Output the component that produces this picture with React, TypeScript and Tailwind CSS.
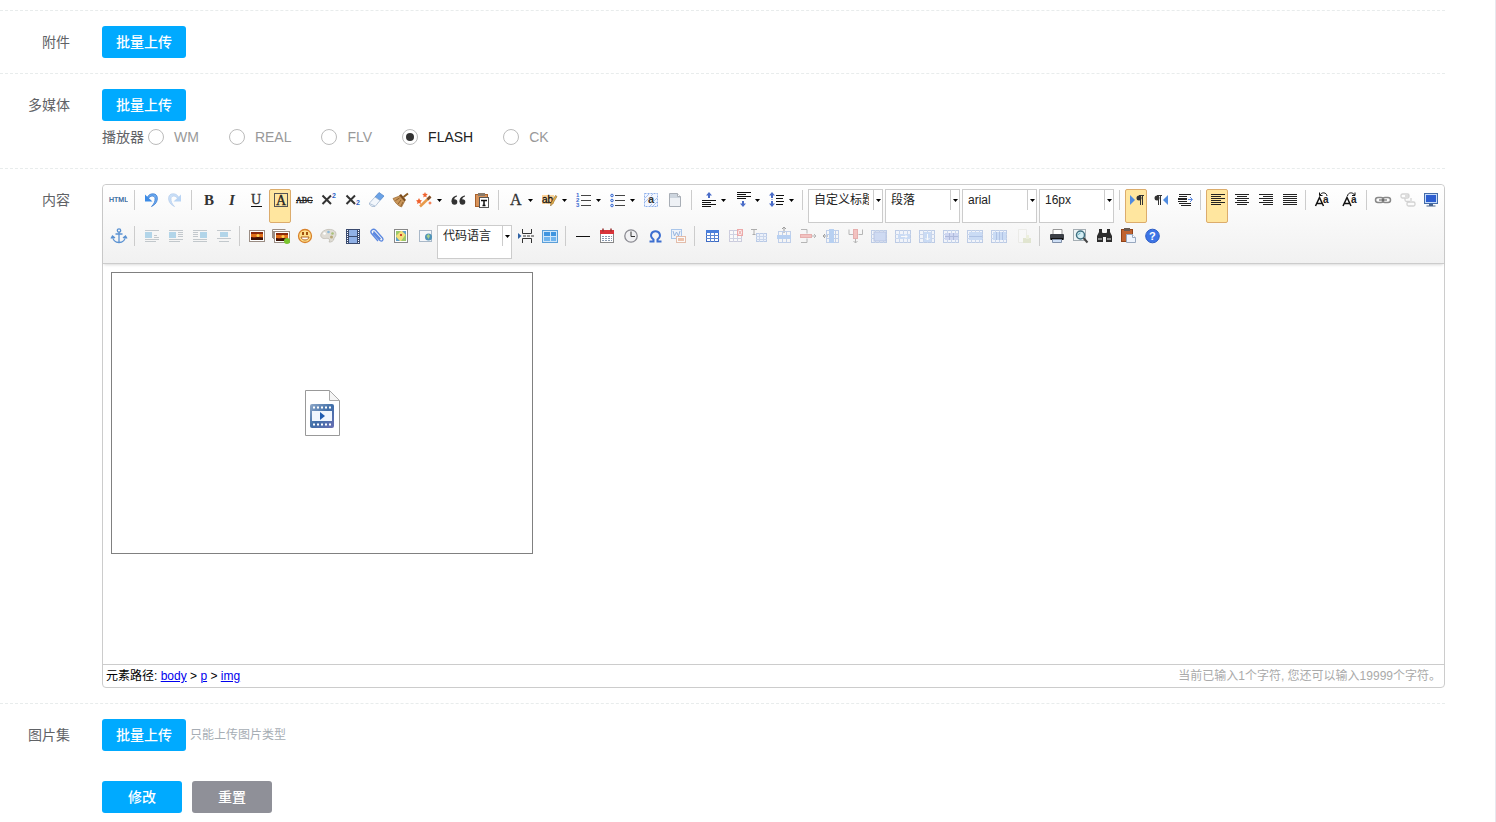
import type { ReactNode } from "react";

/* ---------- toolbar icons, all on a 20x20 grid ---------- */

const Bars = ({ rows, color = "#222" }: { rows: number[][]; color?: string }) => (
  <>
    {rows.map(([x, y, w], i) => (
      <rect key={i} x={x} y={y} width={w} height={1} fill={color} />
    ))}
  </>
);

const Grid = ({ children, x = 2, w = 16 }: { children?: ReactNode; x?: number; w?: number }) => (
  <g>
    <rect x={x + 0.5} y={4.5} width={w - 1} height={12} fill="#eef4ff" stroke="#86a3d6" />
    <path
      d={`M${x} 8.5h${w}M${x} 12.5h${w}M${x + 4.5} 4v13M${x + w / 2 + 0.5} 4v13M${x + w - 3.5} 4v13`}
      stroke="#9db6e2"
      fill="none"
    />
    {children}
  </g>
);

const Photo = ({ x, y }: { x: number; y: number }) => (
  <g>
    <rect x={x + 0.5} y={y + 0.5} width={15} height={11} fill="#fff" stroke="#9a8d84" />
    <rect x={x + 2} y={y + 2} width={12} height={8} fill="#8a2a0c" />
    <rect x={x + 2} y={y + 4} width={12} height={3} fill="#e0701a" />
    <circle cx={x + 9} cy={y + 5.5} r={1.5} fill="#ffd257" />
    <path d={`M${x + 2} ${y + 10}v-3l3 1 4-1 5 1v2z`} fill="#3c1206" />
  </g>
);

const undoShape = (
  <>
    <path d="M7.500 8.500C9 5.500 13.500 5 14 8.500C14.200 11.500 13 14 10.500 16.500C18 13.500 18 4 12.500 3.800C9.500 3.500 7.500 5 6.500 7z" fill="#6aa8ee" stroke="#2f74cf" strokeWidth=".7" />
    <path d="M4 4.500V11.500h7.500L8.800 9 6.500 7z" fill="#3c8be6" />
  </>
);

const upArrow = (x: number, y: number) => <path d={`M${x} ${y}l3 3.500h-2v2.500h-2v-2.500h-2z`} fill="#4a6cc8" />;
const downArrow = (x: number, y: number) => <path d={`M${x} ${y}l3-3.500h-2v-2.500h-2v2.500h-2z`} fill="#4a6cc8" />;

const icons: Record<string, ReactNode> = {
  source: (
    <text x="1" y="12" fontSize="7" fontFamily="Liberation Sans" fill="#1f5c99" stroke="#1f5c99" strokeWidth=".2">HTML</text>
  ),
  undo: undoShape,
  redo: <g transform="matrix(-1 0 0 1 20 0)" opacity=".35">{undoShape}</g>,
  bold: <text x="6" y="15" fontSize="15" fontWeight="bold" fontFamily="Liberation Serif" fill="#333">B</text>,
  italic: <text x="7" y="15" fontSize="15" fontWeight="bold" fontStyle="italic" fontFamily="Liberation Serif" fill="#333">I</text>,
  underline: (
    <>
      <text x="5" y="14" fontSize="14" fontFamily="Liberation Serif" fill="#333" stroke="#333" strokeWidth=".3">U</text>
      <rect x="5" y="16" width="11" height="1" fill="#111" />
    </>
  ),
  fontborder: (
    <>
      <rect x="4.500" y="3.500" width="13" height="13" fill="none" stroke="#555" />
      <text x="6" y="15" fontSize="14" fontFamily="Liberation Serif" fill="#222" stroke="#222" strokeWidth=".3">A</text>
    </>
  ),
  strike: (
    <>
      <text x="2" y="13" fontSize="8" fontFamily="Liberation Serif" fill="#222" stroke="#222" strokeWidth=".4">ABC</text>
      <rect x="2" y="10" width="17" height="1" fill="#222" />
    </>
  ),
  sup: (
    <>
      <path d="M4.500 5.500l8.500 8.500M13 5.500l-8.500 8.500" stroke="#333" strokeWidth="2" />
      <text x="14" y="8" fontSize="7" fontWeight="bold" fontFamily="Liberation Sans" fill="#2f62c4">2</text>
    </>
  ),
  sub: (
    <>
      <path d="M4.500 5.500l8.500 8.500M13 5.500l-8.500 8.500" stroke="#333" strokeWidth="2" />
      <text x="14" y="15" fontSize="7" fontWeight="bold" fontFamily="Liberation Sans" fill="#2f62c4">2</text>
    </>
  ),
  eraser: (
    <>
      <path d="M13 2.500l5 3.500-4 4.500-5-3.500z" fill="#6aa2e6" stroke="#4a80c6" strokeWidth=".7" />
      <path d="M9 7l5 3.500-5 6H6l-2.500-2V13z" fill="#f3f7fc" stroke="#9ab0cc" strokeWidth=".7" />
      <path d="M3.500 13.500l5.500 2.500" stroke="#9ab0cc" strokeWidth=".7" />
    </>
  ),
  broom: (
    <>
      <path d="M18 3.500l-4.500 3.500" stroke="#8a5a20" strokeWidth="2" />
      <path d="M11 4l5 6-1.500 1.500-5.500-6z" fill="#7a4a1a" />
      <path d="M9.500 6l5 5.500-3 5.500c-3-1-6.500-4-8.500-8.500z" fill="#c9965a" stroke="#98662e" strokeWidth=".7" />
      <path d="M9.500 8L5.500 10.500M11 10l-3 4M13 12l-2 4" stroke="#7a4a1a" strokeWidth=".7" />
    </>
  ),
  wand: (
    <>
      <path d="M6 16.500L16.500 6.500" stroke="#e89a4a" strokeWidth="2.500" />
      <path d="M13.500 9.500l3-3" stroke="#7a5030" strokeWidth="2.500" />
      <path d="M5 8l1 2 2 .5-1.500 1.500.5 2-2-1-2 1 .5-2L2 10.500l2-.5zM11 2l.8 1.700 2 .3-1.500 1.500.4 2L11 6.500l-1.700 1 .4-2L8.200 4l2-.3zM16 11l.7 1.500 1.500.5-1.500.5-.7 1.500-.7-1.500-1.500-.5 1.500-.5z" fill="#f0622e" />
    </>
  ),
  quote: (
    <g fill="#333">
      <circle cx="6.500" cy="12" r="2.800" />
      <circle cx="14.500" cy="12" r="2.800" />
      <path d="M3.500 12c0-4 2-6 5.500-6.500v1c-2 .5-3 2-3 4zM11.500 12c0-4 2-6 5.500-6.500v1c-2 .5-3 2-3 4z" />
    </g>
  ),
  pasteplain: (
    <>
      <rect x="3.500" y="4.500" width="12" height="12" fill="#d8935a" stroke="#a8602a" />
      <rect x="6" y="3" width="7" height="3" fill="#8a7a6a" />
      <rect x="7.500" y="7.500" width="9" height="10" fill="#fff" stroke="#555" />
      <path d="M9 10.500h6M12 10v6M10.500 15.500h3" stroke="#111" strokeWidth="1.500" />
    </>
  ),
  forecolor: <text x="5" y="15" fontSize="16" fontFamily="Liberation Serif" fill="#333" stroke="#333" strokeWidth=".3">A</text>,
  backcolor: (
    <>
      <rect x="3" y="5" width="12" height="9" fill="#fbd39a" />
      <text x="3" y="13" fontSize="10" fontFamily="Liberation Sans" fill="#111" stroke="#111" strokeWidth=".3">ab</text>
      <path d="M18 6.500l-4.500 7.500-2 2 .5-3L16.500 5.500z" fill="#e6b04a" stroke="#8a6a30" strokeWidth=".6" />
    </>
  ),
  ol: (
    <>
      <g fontSize="6" fontWeight="bold" fontFamily="Liberation Sans" fill="#3a6ad0">
        <text x="3" y="7">1</text>
        <text x="3" y="12">2</text>
        <text x="3" y="17">3</text>
      </g>
      <Bars rows={[[8, 5, 10], [8, 10, 10], [8, 15, 10]]} color="#444" />
    </>
  ),
  ul: (
    <>
      {[5, 10, 15].map((y) => (
        <circle key={y} cx="5" cy={y + 0.5} r="1.300" fill="#cfe0ff" stroke="#3a6ad0" />
      ))}
      <Bars rows={[[8, 5, 10], [8, 10, 10], [8, 15, 10]]} color="#444" />
    </>
  ),
  selectall: (
    <>
      <rect x="3.500" y="3.500" width="13" height="13" fill="#f2f6ff" stroke="#8fb0ea" strokeDasharray="2 1" />
      <path d="M4 8l4-4M4 12l3-3M12 4l-2 2M16 8l-3 3M16 12l-4 4M9 16l2-2" stroke="#a9c3f0" />
      <text x="7" y="13" fontSize="11" fontWeight="bold" fontFamily="Liberation Sans" fill="#333">a</text>
    </>
  ),
  cleardoc: (
    <>
      <path d="M4.500 3.500h8l3 3v10h-11z" fill="#eef1f5" stroke="#a8aeb6" />
      <path d="M5 4h7l3 3v1H5z" fill="#cdd5de" />
      <path d="M12.500 3.500v3h3" fill="#fff" stroke="#a8aeb6" />
    </>
  ),
  spacetop: (
    <>
      {upArrow(11, 2)}
      <Bars rows={[[4, 10, 14], [4, 12, 9], [4, 14, 14], [4, 16, 9]]} color="#111" />
    </>
  ),
  spacebottom: (
    <>
      <Bars rows={[[5, 2, 14], [5, 4, 9], [5, 6, 14], [5, 8, 9]]} color="#111" />
      {downArrow(11, 17)}
    </>
  ),
  lineheight: (
    <>
      {upArrow(6, 2)}
      {downArrow(6, 17)}
      <path d="M6 7v5" stroke="#4a6cc8" strokeDasharray="1 1" />
      <Bars rows={[[10, 5, 8], [10, 8, 7], [10, 11, 8], [10, 14, 7]]} color="#111" />
    </>
  ),
  ltr: (
    <>
      <path d="M4 5l5 5-5 5z" fill="#4f8be0" />
      <path d="M18 5.500H13M14.500 5.500V15M16.500 5.500V15" stroke="#333" fill="none" />
      <circle cx="13" cy="8" r="2.500" fill="#333" />
    </>
  ),
  rtl: (
    <>
      <path d="M18 5l-5 5 5 5z" fill="#4f8be0" />
      <path d="M12 5.500H7M8.500 5.500V15M10.500 5.500V15" stroke="#333" fill="none" />
      <circle cx="7" cy="8" r="2.500" fill="#333" />
    </>
  ),
  indent: (
    <>
      <Bars rows={[[5, 4, 12], [5, 6, 8], [4, 8, 9], [4, 9, 9], [4, 11, 9], [5, 13, 12], [7, 15, 10]]} />
      <path d="M14 9.500h4M16 7l2.500 2.500-2.500 2.500" stroke="#5a86dd" fill="none" />
    </>
  ),
  left: <Bars rows={[[4, 4, 14], [4, 6, 10], [4, 8, 14], [4, 10, 10], [4, 12, 14], [4, 14, 10]]} />,
  center: <Bars rows={[[4, 4, 14], [6, 6, 10], [4, 8, 14], [6, 10, 10], [4, 12, 14], [6, 14, 10]]} />,
  right: <Bars rows={[[4, 4, 14], [8, 6, 10], [4, 8, 14], [8, 10, 10], [4, 12, 14], [8, 14, 10]]} />,
  justify: <Bars rows={[[4, 4, 14], [4, 6, 14], [4, 8, 14], [4, 10, 14], [4, 12, 14], [4, 14, 14]]} />,
  upper: (
    <>
      <path d="M2.500 16l4-8.500L10.500 16M4 13.500h5" stroke="#111" strokeWidth="1.500" fill="none" />
      <text x="10" y="13" fontSize="10" fontWeight="bold" fontFamily="Liberation Sans" fill="#222">a</text>
      <path d="M14 6C13.500 2 8.500 2 7 5M9.500 5.500H6.500V2.500" stroke="#111" fill="none" />
    </>
  ),
  lower: (
    <>
      <path d="M4 16l4-8.500L12 16M5.500 13.500h5" stroke="#111" strokeWidth="1.500" fill="none" />
      <text x="12" y="13" fontSize="10" fontWeight="bold" fontFamily="Liberation Sans" fill="#222">a</text>
      <path d="M8.500 6C9 2 14 2 15.500 5M13 5.500h3V2.500" stroke="#111" fill="none" />
    </>
  ),
  link: (
    <>
      <rect x="2.500" y="7.500" width="8" height="5" rx="2.500" fill="none" stroke="#888" strokeWidth="1.500" />
      <rect x="9.500" y="7.500" width="8" height="5" rx="2.500" fill="none" stroke="#888" strokeWidth="1.500" />
      <path d="M6 10h8" stroke="#555" />
    </>
  ),
  unlink: (
    <g opacity=".35" fill="none" stroke="#888" strokeWidth="1.300">
      <rect x="4" y="4" width="8" height="4" rx="1.500" />
      <path d="M8 8v2c0 1 1 1.500 2 1.500h3M8 6h4M14 8v3" />
      <rect x="10" y="12" width="8" height="4" rx="1.500" />
    </g>
  ),
  fullscreen: (
    <>
      <rect x="3.500" y="3.500" width="13" height="10" fill="#c6dcfa" stroke="#456ca8" />
      <rect x="5" y="5" width="10" height="7" fill="#2d5ed0" />
      <path d="M8 14h4v1.500h2.500v1h-9v-1H8z" fill="#4a668f" />
    </>
  ),
  anchor: (
    <g fill="none" stroke="#5b92d2" strokeWidth="1.300">
      <circle cx="11" cy="4.500" r="1.700" />
      <path d="M11 6v10.500M7.500 8h7M4.500 10.500C5 14.500 8 16.500 11 16.500s6-2 6.500-6M3 12.500l1.500-2.500L7 12M19 12.500L17.500 10 15 12" />
    </g>
  ),
  imgnone: (
    <g opacity=".55">
      <rect x="4" y="6" width="7" height="6" fill="#7cbbe0" />
      <Bars rows={[[4, 4, 14], [13, 9, 3], [13, 11, 5], [4, 13, 14], [4, 15, 11]]} color="#9aa4ac" />
    </g>
  ),
  imgleft: (
    <g opacity=".55">
      <rect x="4" y="6" width="7" height="6" fill="#7cbbe0" />
      <Bars rows={[[4, 4, 14], [13, 6, 5], [13, 8, 5], [13, 10, 5], [4, 13, 14], [4, 15, 11]]} color="#9aa4ac" />
    </g>
  ),
  imgright: (
    <g opacity=".55">
      <rect x="11" y="6" width="7" height="6" fill="#7cbbe0" />
      <Bars rows={[[4, 4, 14], [4, 6, 5], [4, 8, 5], [4, 10, 5], [4, 13, 14], [4, 15, 14]]} color="#9aa4ac" />
    </g>
  ),
  imgcenter: (
    <g opacity=".55">
      <rect x="7" y="6" width="8" height="5" fill="#7cbbe0" />
      <Bars rows={[[4, 4, 14], [4, 12, 14], [6, 15, 10]]} color="#9aa4ac" />
    </g>
  ),
  image: <Photo x={3} y={4} />,
  images: (
    <>
      <path d="M2.500 12V3.500h13M3.500 13V5" stroke="#9a8d84" fill="#fff" />
      <Photo x={4} y={5} />
      <circle cx="17" cy="15" r="3" fill="#7ac52e" />
    </>
  ),
  emoji: (
    <>
      <circle cx="11" cy="10" r="6.500" fill="#fde08c" stroke="#d9822b" strokeWidth="1.300" />
      <rect x="8" y="6" width="2" height="3" fill="#a1520f" />
      <rect x="12" y="6" width="2" height="3" fill="#a1520f" />
      <path d="M7 11h8c-.5 4-7.500 4-8 0z" fill="#fff" stroke="#b5651d" />
    </>
  ),
  scrawl: (
    <>
      <path d="M3 8C5 2.500 15 2 17.500 6c1.500 4-1 5-1.500 6.500 0 2.500-3 4-5 3.500 2-3-1-4-3.500-3.500C4 13 2 10.500 3 8z" fill="#dfdcd5" stroke="#b9b5aa" strokeWidth=".7" />
      <circle cx="6.500" cy="7.500" r="1.300" fill="#fff" />
      <circle cx="10.500" cy="6" r="1.300" fill="#8bb8d8" />
      <circle cx="14.500" cy="7.500" r="1.300" fill="#a8c078" />
      <circle cx="13.500" cy="11" r="1.500" fill="#b8a878" />
    </>
  ),
  video: (
    <>
      <rect x="4" y="3" width="14" height="15" fill="#3a4a6e" />
      <rect x="7" y="4" width="8" height="6" fill="#8fb0e6" />
      <rect x="7" y="11" width="8" height="6" fill="#8fb0e6" />
      <path d="M5.500 4v13M16.500 4v13" stroke="#fff" strokeDasharray="1 1" />
    </>
  ),
  attach: (
    <path
      d="M7 7l7 7.500c2 1.500 4-.5 2.500-2.500L9.500 4C7 2 3.500 5 5.500 7.500l6.500 7.500M7.500 5.500l7 7.500"
      fill="none"
      stroke="#5b88e0"
      strokeWidth="1.300"
    />
  ),
  map: (
    <>
      <rect x="4.500" y="3.500" width="13" height="13" fill="#fff" stroke="#888" />
      <rect x="6" y="5" width="10" height="10" fill="#9cc86a" />
      <path d="M6 10l5-5h5v3l-5 7H9z" fill="#f3df7a" />
      <path d="M12 5h4v4zM6 11l4 4H6z" fill="#5fa0c8" />
      <rect x="10" y="8" width="2" height="2" fill="#d0452c" />
    </>
  ),
  iframe: (
    <>
      <rect x="5.500" y="4.500" width="12" height="11" fill="#f5f7fa" stroke="#a9b8c8" />
      <circle cx="14.500" cy="11" r="3.500" fill="#4f93b8" />
      <path d="M12.500 10l2-2 1.500 2-1.500 3z" fill="#a6d08a" />
    </>
  ),
  pagebreak: (
    <>
      <path d="M7.500 3v4.500h9V3M7.500 17v-4.500h9V17" stroke="#333" fill="none" />
      <path d="M8 10h11" stroke="#333" strokeDasharray="3 1" />
      <path d="M3 7l3.500 3L3 13z" fill="#2f62a4" />
    </>
  ),
  template: (
    <>
      <rect x="3.500" y="4.500" width="15" height="12" fill="#cfe6fa" stroke="#5b9fd8" />
      <rect x="5" y="6" width="6" height="4" fill="#3f95e0" />
      <rect x="12" y="6" width="5" height="4" fill="#3f95e0" />
      <rect x="5" y="11" width="6" height="4" fill="#6fb4ee" />
      <rect x="12" y="11" width="5" height="4" fill="#6fb4ee" />
    </>
  ),
  hr: <rect x="4" y="10" width="14" height="1" fill="#111" />,
  date: (
    <>
      <rect x="4.500" y="4.500" width="13" height="12" fill="#fff" stroke="#888" />
      <rect x="4" y="4" width="14" height="4" fill="#d9343a" />
      <path d="M7 2.500v3M15 2.500v3" stroke="#933" strokeWidth="1.500" />
      <path d="M6 10.500h10M6 12.500h10M6 14.500h10" stroke="#8a9ab0" strokeDasharray="2 1" />
    </>
  ),
  time: (
    <>
      <circle cx="11" cy="10" r="6.200" fill="#f1f1f3" stroke="#8b8b92" strokeWidth="1.300" />
      <path d="M11 5.500V10.500h4" stroke="#333" fill="none" />
    </>
  ),
  omega: (
    <path
      d="M5.500 15.500h4v-2C7 11.500 6.500 9.500 7.500 7.500c1.500-3 6.500-3 8 0 1 2 .5 4-2 6v2h4"
      fill="none"
      stroke="#3d6fd0"
      strokeWidth="2"
    />
  ),
  wordimage: (
    <g opacity=".55">
      <rect x="3.500" y="3.500" width="10" height="9" fill="#e8f1ff" stroke="#6c9fe0" />
      <path d="M5 5l1.500 5L8.500 6l2 4L12 5" stroke="#4a80cc" fill="none" />
      <rect x="8.500" y="10.500" width="9" height="6" fill="#fff" stroke="#d59070" />
      <rect x="10" y="12" width="6" height="3" fill="#e89a70" />
    </g>
  ),
  table: (
    <>
      <rect x="5.500" y="4.500" width="12" height="11" fill="#fff" stroke="#3f6cc4" />
      <rect x="5" y="4" width="13" height="3" fill="#4a7fdc" />
      <path d="M5 9.500h13M5 12.500h13M9.500 7v9M13.500 7v9" stroke="#5c86d2" />
    </>
  ),
  deltable: (
    <g opacity=".45">
      <rect x="4.500" y="4.500" width="12" height="11" fill="#fff" stroke="#9a9ac0" />
      <path d="M4 8.500h13M4 12.500h13M8.500 4v12M12.500 4v12" stroke="#a0a8cc" />
      <rect x="12.500" y="3.500" width="5" height="6" fill="#fde4e4" stroke="#e04a4a" />
      <path d="M13.500 4.500l3 4M16.500 4.500l-3 4" stroke="#e04a4a" />
    </g>
  ),
  parabefore: (
    <g opacity=".5">
      <path d="M2 3.500h6M5 3v6M3.500 8.500h3" stroke="#666" />
      <rect x="7.500" y="7.500" width="10" height="8" fill="#e4eeff" stroke="#7fa0d8" />
      <path d="M7 10.500h11M7 13.500h11M10.500 7v9M14.500 7v9" stroke="#9db6e2" />
    </g>
  ),
  insrow: (
    <g opacity=".6">
      <path d="M11 1v6M9 3l2-2 2 2" stroke="#666" fill="none" />
      <rect x="5.500" y="5.500" width="12" height="11" fill="none" stroke="#9db6e2" />
      <path d="M9.500 5v12M13.500 5v12" stroke="#9db6e2" />
      <rect x="4" y="9" width="14" height="4" fill="#8fb8f0" />
    </g>
  ),
  delrow: (
    <g opacity=".5">
      <path d="M4 3.500h6v4M4 16.500h6v-4M15 10h3M17 8l2 2-2 2" stroke="#777" fill="none" />
      <rect x="3.500" y="8.500" width="11" height="3" fill="#f0908c" stroke="#d86a68" />
    </g>
  ),
  inscol: (
    <g opacity=".6">
      <path d="M2 10h5M4 8l-2 2 2 2" stroke="#666" fill="none" />
      <rect x="5.500" y="4.500" width="12" height="12" fill="none" stroke="#9db6e2" />
      <path d="M5 8.500h13M5 12.500h13M14.500 4v13" stroke="#9db6e2" />
      <rect x="8" y="3" width="5" height="14" fill="#8fb8f0" />
    </g>
  ),
  delcol: (
    <g opacity=".5">
      <path d="M4 3.500v5h4M17.500 3.500v5h-4M10.500 13v4M8.500 15l2 2 2-2" stroke="#777" fill="none" />
      <rect x="8.500" y="3.500" width="4" height="9" fill="#f0908c" stroke="#d86a68" />
    </g>
  ),
  merge: <g opacity=".5"><Grid><rect x="5" y="6" width="12" height="9" fill="#a8bff0" stroke="#7f96d0" /></Grid></g>,
  mergeright: <g opacity=".5"><Grid><rect x="5" y="8" width="12" height="5" fill="#a0c2f4" /><path d="M8 10.500h6M12 8.500l2 2-2 2" stroke="#fff" fill="none" /></Grid></g>,
  mergedown: <g opacity=".5"><Grid><rect x="7" y="6" width="7" height="10" fill="#a0c2f4" /><path d="M10.500 8v6M8.500 12l2 2 2-2" stroke="#fff" fill="none" /></Grid></g>,
  splitcells: <g opacity=".5"><Grid><rect x="4" y="7" width="13" height="7" fill="#a8b8ee" /><path d="M4 10.500h13M8.500 7v7M12.500 7v7" stroke="#6a80c4" /></Grid></g>,
  splitrows: <g opacity=".5"><Grid><rect x="4" y="6" width="13" height="8" fill="#a0c2f4" /><path d="M4 10.500h13" stroke="#6a90d4" /></Grid></g>,
  splitcols: <g opacity=".5"><Grid><rect x="4" y="6" width="13" height="8" fill="#a0c2f4" /><path d="M7.500 6v8M10.500 6v8M13.500 6v8" stroke="#6a90d4" /></Grid></g>,
  charts: (
    <g opacity=".4">
      <path d="M5.500 3.500h8v13h-8z" fill="#fafafa" stroke="#dcdcd4" />
      <path d="M10 12h8v5h-8z" fill="#c4cf9a" />
      <path d="M13 9h3v4h-3z" fill="#dfe6b8" />
    </g>
  ),
  print: (
    <>
      <path d="M7 3.500h9v5H7z" fill="#fff" stroke="#999" />
      <rect x="4" y="8" width="14" height="6" rx="1" fill="#3b3f46" />
      <rect x="5" y="12" width="12" height="2" fill="#111" />
      <path d="M6.500 13.500h9v3h-9z" fill="#cfe0f6" stroke="#7f8fa8" />
    </>
  ),
  preview: (
    <>
      <rect x="3.500" y="3.500" width="12" height="11" fill="#eef4f6" stroke="#a5aeb4" />
      <circle cx="10.500" cy="9" r="4" fill="#d5eef4" stroke="#3f7080" strokeWidth="1.500" />
      <path d="M13.500 12l4 4.500" stroke="#444" strokeWidth="2" />
      <path d="M8.500 9a2 2 0 012-2" stroke="#5fb0c4" fill="none" />
    </>
  ),
  find: (
    <g fill="#2c2c2c">
      <path d="M5 3h3v3l1 2v8H3v-6l2-4zM13 3h3v3l2 4v6h-6V8l1-2z" />
      <rect x="8" y="7" width="5" height="4" />
      <rect x="4" y="12" width="4" height="2" fill="#888" />
      <rect x="13" y="12" width="4" height="2" fill="#888" />
    </g>
  ),
  drafts: (
    <>
      <rect x="3.500" y="3.500" width="11" height="12" fill="#c0622e" stroke="#8f4218" />
      <rect x="6" y="2" width="6" height="3" fill="#6a5a50" />
      <path d="M8.500 8.500h6l3 3v5h-9z" fill="#eef4fd" stroke="#98a8bf" />
      <path d="M14.500 8.500v3h3" fill="#fff" stroke="#98a8bf" />
    </>
  ),
  help: (
    <>
      <circle cx="10.500" cy="10" r="6.800" fill="#3d74e6" stroke="#2c5cc4" />
      <text x="7" y="14" fontSize="11" fontWeight="bold" fontFamily="Liberation Sans" fill="#fff">?</text>
    </>
  ),
};

/* ---------- toolbar parts ---------- */

type Item =
  | "|"
  | { icon: string; label: string; menu?: boolean; on?: boolean; wide?: boolean }
  | { select: string; label: string };

const tool = (icon: string, label: string, extra: { menu?: boolean; on?: boolean; wide?: boolean } = {}): Item => ({ icon, label, ...extra });

const items: Item[] = [
  tool("source", "源代码"), "|",
  tool("undo", "撤销"), tool("redo", "重做"), "|",
  tool("bold", "加粗"), tool("italic", "斜体"), tool("underline", "下划线"), tool("fontborder", "字符边框", { on: true }),
  tool("strike", "删除线"), tool("sup", "上标"), tool("sub", "下标"), tool("eraser", "清除格式"), tool("broom", "格式刷"),
  tool("wand", "自动排版", { menu: true }), tool("quote", "引用"), tool("pasteplain", "纯文本粘贴模式"), "|",
  tool("forecolor", "字体颜色", { menu: true }), tool("backcolor", "背景色", { menu: true }),
  tool("ol", "有序列表", { menu: true }), tool("ul", "无序列表", { menu: true }),
  tool("selectall", "全选"), tool("cleardoc", "清空文档"), "|",
  tool("spacetop", "段前距", { menu: true }), tool("spacebottom", "段后距", { menu: true }), tool("lineheight", "行间距", { menu: true }), "|",
  { select: "自定义标题", label: "标题样式" }, { select: "段落", label: "段落格式" }, { select: "arial", label: "字体" }, { select: "16px", label: "字号" }, "|",
  tool("ltr", "从左向右输入", { on: true }), tool("rtl", "从右向左输入"), tool("indent", "首行缩进"), "|",
  tool("left", "居左对齐", { on: true }), tool("center", "居中对齐"), tool("right", "居右对齐"), tool("justify", "两端对齐"), "|",
  tool("upper", "字母大写", { wide: true }), tool("lower", "字母小写", { wide: true }), "|",
  tool("link", "超链接"), tool("unlink", "取消链接"), tool("fullscreen", "全屏"),
  tool("anchor", "锚点"), "|",
  tool("imgnone", "默认"), tool("imgleft", "左浮动"), tool("imgright", "右浮动"), tool("imgcenter", "居中"), "|",
  tool("image", "单图上传"), tool("images", "多图上传"), tool("emoji", "表情"), tool("scrawl", "涂鸦"), tool("video", "视频"),
  tool("attach", "附件"), tool("map", "地图"), tool("iframe", "插入Iframe"),
  { select: "代码语言", label: "代码语言" },
  tool("pagebreak", "分页"), tool("template", "模板"), "|",
  tool("hr", "分隔线"), tool("date", "日期"), tool("time", "时间"), tool("omega", "特殊字符"), tool("wordimage", "图片转存"), "|",
  tool("table", "插入表格"), tool("deltable", "删除表格"), tool("parabefore", "表格前插入行"), tool("insrow", "前插入行"),
  tool("delrow", "删除行"), tool("inscol", "前插入列"), tool("delcol", "删除列"), tool("merge", "合并多个单元格"),
  tool("mergeright", "右合并单元格"), tool("mergedown", "下合并单元格"), tool("splitcells", "完全拆分单元格"),
  tool("splitrows", "拆分成行"), tool("splitcols", "拆分成列"), tool("charts", "图表"), "|",
  tool("print", "打印"), tool("preview", "预览"), tool("find", "查询替换"), tool("drafts", "从草稿箱加载"), tool("help", "帮助"),
];

const Caret = () => (
  <svg viewBox="0 0 5 3" className="h-[3px] w-[5px] shrink-0">
    <path d="M0 0h5L2.500 3z" fill="#000" />
  </svg>
);

const ToolbarItem = ({ item }: { item: Item }) => {
  if (item === "|") {
    return <span className="mx-1 mt-px h-5 w-px bg-[#ccc]" />;
  }
  if ("select" in item) {
    return (
      <div className="mx-px flex h-[34px] w-[75px] items-start border border-[#ccc] bg-white">
        <select
          aria-label={item.label}
          className="h-5 w-[65px] appearance-none border-r border-[#ccc] bg-white pr-1 pl-[5px] text-[12px] leading-5 text-[#222] outline-none"
        >
          <option>{item.select}</option>
        </select>
        <span className="pointer-events-none flex h-5 flex-1 items-center justify-center">
          <Caret />
        </span>
      </div>
    );
  }
  return (
    <button
      type="button"
      aria-label={item.label}
      className={`mx-px flex h-[34px] items-start justify-center rounded-xs border ${
        item.on ? "border-[#dcac6c] bg-[#ffe69f]" : "border-transparent"
      } ${item.menu ? "w-8" : item.wide ? "w-6" : "w-[22px]"}`}
    >
      <svg viewBox="0 0 20 20" className="size-5 shrink-0">
        {icons[item.icon]}
      </svg>
      {item.menu && (
        <span className="flex h-5 flex-1 items-center justify-center">
          <Caret />
        </span>
      )}
    </button>
  );
};

/* ---------- form parts ---------- */

const Row = ({ label, last, children }: { label: string; last?: boolean; children: ReactNode }) => (
  <div className={`flex gap-8 py-[15px] ${last ? "" : "border-b border-dashed border-[#e8ecec]"}`}>
    <div className="w-[70px] shrink-0 text-right leading-8">{label}</div>
    <div className="min-w-0 flex-1">{children}</div>
  </div>
);

const UploadButton = () => (
  <button type="button" className="h-8 rounded-[3px] bg-[#00aaff] px-[14px] font-medium text-white">
    批量上传
  </button>
);

const players = ["WM", "REAL", "FLV", "FLASH", "CK"];

export default function App() {
  return (
    <form
      onSubmit={(e) => e.preventDefault()}
      className="min-h-screen border-r border-[#e8e8ee] bg-white pt-[10px] pr-[50px] font-['Liberation_Sans','Noto_Sans_CJK_SC',sans-serif] text-[14px] text-[#606266]"
    >
      <div className="border-t border-dashed border-[#e8ecec]">
        <Row label="附件">
          <div className="flex">
            <UploadButton />
          </div>
        </Row>

        <Row label="多媒体">
          <div className="flex">
            <UploadButton />
          </div>
          <div role="radiogroup" aria-label="播放器" className="flex h-8 items-center gap-1">
            <span>播放器</span>
            <div className="flex gap-[30px]">
              {players.map((name) => (
                <label key={name} className="flex items-center gap-[10px] text-[#999] has-checked:text-[#222]">
                  <input
                    type="radio"
                    name="player"
                    value={name}
                    defaultChecked={name === "FLASH"}
                    className="size-4 appearance-none rounded-full border border-[#bbb] bg-white bg-clip-content p-[3px] checked:bg-[#333]"
                  />
                  {name}
                </label>
              ))}
            </div>
          </div>
        </Row>

        <Row label="内容">
          <div className="rounded-sm border border-[#ccc] bg-white text-[12px]">
            <div className="flex flex-wrap gap-y-[2px] rounded-t-sm border-b border-[#ccc] bg-linear-to-b from-white to-[#f1f1f1] py-1 pl-[3px] shadow-[0_2px_3px_-1px_rgba(0,0,0,0.15)]">
              {items.map((item, i) => (
                <ToolbarItem key={i} item={item} />
              ))}
            </div>

            <div className="min-h-[400px] p-2">
              {/* embedded video placeholder */}
              <div className="flex h-[282px] w-[422px] items-center justify-center border border-[#808080]">
                <svg viewBox="0 0 35 46" className="h-[46px] w-[35px]">
                  <path d="M.5.5h24l10 10v35H.5z" fill="#fff" stroke="#999" />
                  <path d="M24.500.5v10h10z" fill="#f6f6f6" stroke="#aaa" />
                  <linearGradient id="film" x1="0" y1="0" x2="1" y2="1">
                    <stop offset="0" stopColor="#8fa8c8" />
                    <stop offset=".5" stopColor="#3f6ea8" />
                    <stop offset="1" stopColor="#6a6fb4" />
                  </linearGradient>
                  <rect x="5" y="14" width="24" height="24" rx="2" fill="url(#film)" />
                  <path d="M8 17.500h20M8 34.500h20" stroke="#fff" strokeWidth="2" strokeDasharray="2 2" />
                  <rect x="7" y="21" width="20" height="10" fill="#f0f6fd" />
                  <path d="M15 22l5 4-5 4z" fill="#1f5cb0" />
                </svg>
              </div>
            </div>

            <div className="flex h-[23px] items-center justify-between border-t border-[#ccc] px-[3px] text-black">
              <span>
                元素路径:{" "}
                <a href="#body" className="text-[#0000ee] underline">body</a> &gt;{" "}
                <a href="#p" className="text-[#0000ee] underline">p</a> &gt;{" "}
                <a href="#img" className="text-[#0000ee] underline">img</a>
              </span>
              <span className="text-[#aaa]">当前已输入1个字符, 您还可以输入19999个字符。</span>
            </div>
          </div>
        </Row>

        <Row label="图片集" last>
          <div className="flex items-center gap-1">
            <UploadButton />
            <span className="text-[12px] text-[#a6adb4]">只能上传图片类型</span>
          </div>
        </Row>

        <div className="flex gap-[10px] pt-[15px] pl-[102px] font-medium text-white">
          <button type="submit" className="h-8 w-20 rounded-[3px] bg-[#00aaff]">修改</button>
          <button type="reset" className="h-8 w-20 rounded-[3px] bg-[#8f9098]">重置</button>
        </div>
      </div>
    </form>
  );
}
